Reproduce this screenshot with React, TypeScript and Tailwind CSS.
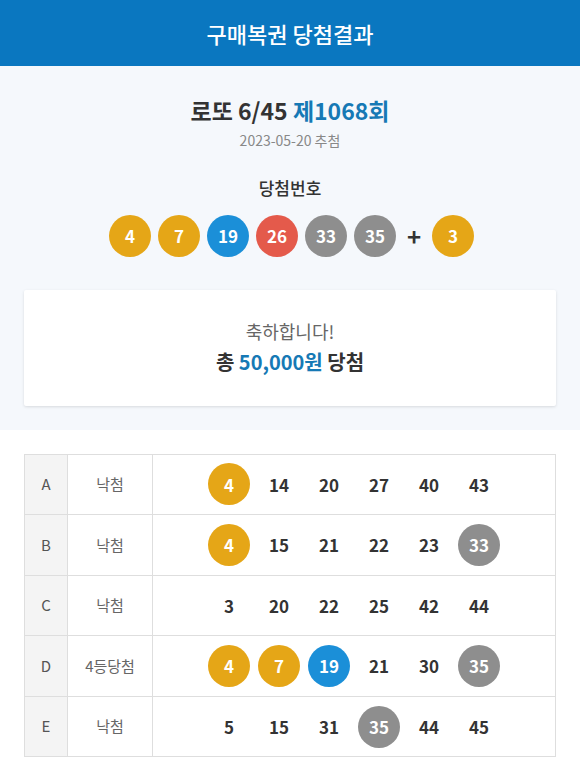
const font = { fontFamily: '"Noto Sans CJK KR", "Noto Sans", sans-serif' };

type BallColor = "yellow" | "blue" | "red" | "gray";

const ballClass: Record<BallColor, string> = {
  yellow: "bg-[#e5a617]",
  blue: "bg-[#1b8fd8]",
  red: "bg-[#e45a4b]",
  gray: "bg-[#8e8e8e]",
};

function colorOf(n: number): BallColor {
  if (n <= 10) return "yellow";
  if (n <= 20) return "blue";
  if (n <= 30) return "red";
  return "gray";
}

const winning = [4, 7, 19, 26, 33, 35];
const bonus = 3;

const games = [
  { label: "A", result: "낙첨", nums: [4, 14, 20, 27, 40, 43] },
  { label: "B", result: "낙첨", nums: [4, 15, 21, 22, 23, 33] },
  { label: "C", result: "낙첨", nums: [3, 20, 22, 25, 42, 44] },
  { label: "D", result: "4등당첨", nums: [4, 7, 19, 21, 30, 35] },
  { label: "E", result: "낙첨", nums: [5, 15, 31, 35, 44, 45] },
];

function Ball({ n }: { n: number }) {
  return (
    <span
      className={`flex size-[42px] items-center justify-center rounded-full text-[17px] font-bold text-white ${ballClass[colorOf(n)]}`}
    >
      {n}
    </span>
  );
}

export default function App() {
  return (
    <div className="min-h-[759px] bg-white text-[#333]" style={font}>
      <header className="flex h-[66px] items-center justify-center bg-[#0a77c0]">
        <h1 className="text-[22px] font-medium text-white">구매복권 당첨결과</h1>
      </header>

      <section className="flex flex-col items-center bg-[#f5f8fc] px-6 pt-[27px] pb-[24px]">
        <h2 className="text-[23px] font-bold leading-[34px] text-[#333]">
          로또 6/45 <span className="text-[#1679b5]">제1068회</span>
        </h2>
        <p className="mt-[3px] text-[14px] text-[#888]">2023-05-20 추첨</p>

        <p className="mt-[24px] text-[17px] font-medium text-[#333]">당첨번호</p>
        <div className="mt-[14px] ml-[3px] flex items-center gap-[7px]">
          {winning.map((n) => (
            <Ball key={n} n={n} />
          ))}
          <span className="mx-[4px] text-[24px] font-bold leading-none text-[#333]">+</span>
          <Ball n={bonus} />
        </div>

        <div className="mt-[33px] flex h-[116px] w-full flex-col items-center justify-center rounded-[2px] bg-white shadow-[0_1px_3px_rgba(0,0,0,0.12)]">
          <p className="text-[18px] text-[#666]">축하합니다!</p>
          <p className="mt-[2px] text-[20px] font-bold text-[#333]">
            총 <span className="text-[#1679b5]">50,000원</span> 당첨
          </p>
        </div>
      </section>

      <div className="px-6 pt-6">
        <div className="border-t border-l border-[#dedede]">
          {games.map((g) => (
            <div
              key={g.label}
              className="grid h-[60.6px] grid-cols-[43px_85px_1fr] border-b border-[#dedede]"
            >
              <div className="flex items-center justify-center border-r border-[#dedede] bg-[#f4f4f4] text-[15px] text-[#555]">
                {g.label}
              </div>
              <div className="flex items-center justify-center border-r border-[#dedede] text-[15px] text-[#666]">
                {g.result}
              </div>
              <div className="flex items-center justify-center gap-2 border-r border-[#dedede]">
                {g.nums.map((n) =>
                  winning.includes(n) ? (
                    <Ball key={n} n={n} />
                  ) : (
                    <span
                      key={n}
                      className="flex w-[42px] items-center justify-center text-[17px] font-bold text-[#333]"
                    >
                      {n}
                    </span>
                  ),
                )}
              </div>
            </div>
          ))}
        </div>
      </div>
    </div>
  );
}
